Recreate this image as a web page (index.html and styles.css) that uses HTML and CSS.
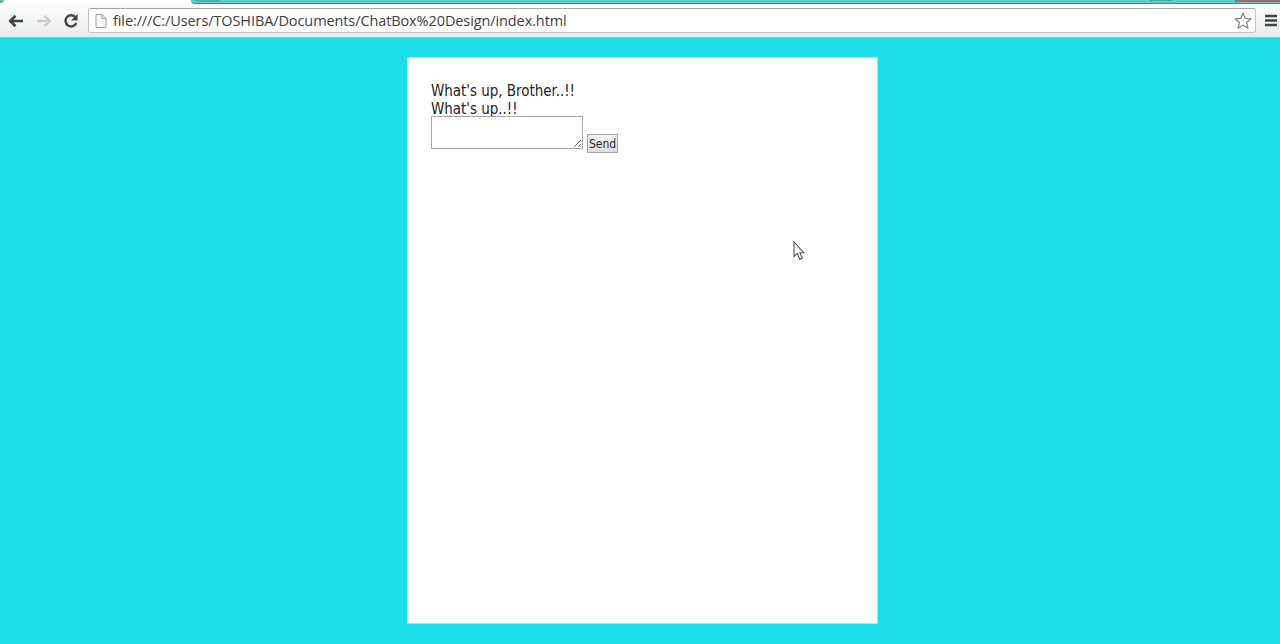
FILE: index.html
```html
<!DOCTYPE html>
<html lang="en">
<head>
<meta charset="utf-8">
<title>ChatBox Design</title>
<link rel="stylesheet" href="styles.css">
</head>
<body>
<header class="browser">
  <div class="tabstrip">
    <span class="tab-left"></span>
    <span class="tab-active"></span>
    <span class="strip"><i class="new-tab"></i><i class="minimize"></i><i class="close"></i></span>
  </div>
  <div class="toolbar">
    <svg class="back" width="16" height="14" viewBox="0 0 16 14"><path d="M15 7H3M7.5 1.8L2.3 7l5.2 5.2" fill="none" stroke="#41433f" stroke-width="2.7"/></svg>
    <svg class="forward" width="16" height="14" viewBox="0 0 16 14"><path d="M1 7h12M8.5 1.8L13.7 7l-5.2 5.2" fill="none" stroke="#cbcccb" stroke-width="2.4"/></svg>
    <svg class="reload" width="16" height="16" viewBox="0 0 16 16"><path d="M12.6 4.4A5.6 5.6 0 1 0 13.3 10" fill="none" stroke="#454745" stroke-width="2.4"/><path d="M14.6 1v6.6H8z" fill="#454745"/></svg>
    <div class="address">
      <svg class="page" width="12" height="16" viewBox="0 0 12 16"><path d="M1 1.5h6l4 4v9H1zM7 1.5v4h4" fill="#fafafa" stroke="#9b9b9b"/></svg>
      <span class="url">file:///C:/Users/TOSHIBA/Documents/ChatBox%20Design/index.html</span>
      <svg class="star" width="18" height="18" viewBox="0 0 18 18"><path d="M9 1.2l2.2 5.1 5.7.5-4.3 3.8 1.3 5.7L9 13.3l-4.9 3 1.3-5.7-4.3-3.8 5.7-.5z" fill="#fff" stroke="#858585" stroke-width="1.3" stroke-linejoin="round"/></svg>
    </div>
    <svg class="menu" width="12" height="13" viewBox="0 0 12 13"><path d="M0 2h12M0 6.5h12M0 11h12" stroke="#424442" stroke-width="2.7"/></svg>
  </div>
</header>
<main class="chatbox">
  <div class="message">What's up, Brother..!!</div>
  <div class="message">What's up..!!</div>
  <form class="composer">
    <textarea class="entry" aria-label="Message"></textarea>
    <button class="send" type="button">Send</button>
  </form>
</main>
<svg class="pointer" width="13" height="20" viewBox="0 0 13 20"><path d="M1 1v14.5l3.3-3 2.5 5.7 2.5-1.1-2.4-5.4h3.9z" fill="#fff" stroke="#555" stroke-width="1.1"/></svg>
</body>
</html>
```
FILE: styles.css
```css
* { box-sizing: border-box; }
body { margin: 0; height: 644px; overflow: hidden; background: #1cdee8; font-family: "DejaVu Sans Condensed", "DejaVu Sans", sans-serif; }
svg { display: block; flex: none; }
.browser { height: 38px; display: flex; flex-direction: column; background: #f8f9f9; }
.tabstrip { height: 4px; display: flex; flex: none; }
.tab-left { width: 4px; height: 3px; background: #5fb5a4; border-bottom-right-radius: 4px; }
.tab-active { width: 187px; background: #fdfdfd; }
.strip { flex: 1; display: flex; background: #5ccfcd; border-bottom: 1px solid #388f8e; border-bottom-left-radius: 5px; }
.new-tab { width: 26px; height: 2px; margin-left: 4px; background: #48b5b2; border-radius: 0 0 4px 4px; }
.minimize { width: 22px; height: 1px; margin-left: auto; background: #43a2a6; }
.close { width: 45px; height: 2px; margin-left: 63px; background: #a96566; }
.toolbar { height: 34px; display: flex; align-items: center; padding: 0 2px 0 8px; background: linear-gradient(#fdfdfd, #e9ebeb); border-bottom: 1px solid #a6bdbb; }
.forward { margin-left: 12px; }
.reload { margin-left: 11px; }
.address { width: 1168px; height: 25px; margin-left: 9px; display: flex; align-items: center; padding: 1px 3px 0 6px; background: #fff; border: 1px solid #c0c3c3; border-top-color: #a3a6a6; border-radius: 3px; }
.url { margin-left: 6px; font: 14.5px/20px "Open Sans", sans-serif; letter-spacing: -0.1px; color: #3e403f; white-space: nowrap; }
.star { margin-left: auto; }
.menu { margin-left: 9px; }
.chatbox { width: 471px; height: 567px; margin: 19px 0 0 407px; padding: 24px 23px; background: #fff; border: 1px solid #a5e6e9; }
.message { height: 18px; font-size: 15px; line-height: 18px; letter-spacing: -0.03px; color: #242424; white-space: nowrap; }
.composer { height: 38px; margin: -2px 0 0; display: flex; align-items: flex-start; }
.entry { width: 152px; height: 33px; margin: 0; background: transparent; border: 1px solid #a7a7a7; resize: both; }
.send { width: 31px; height: 19px; margin: 18px 0 0 4px; padding: 1px 0 0; display: flex; align-items: center; justify-content: center; font: 12px/16px "DejaVu Sans Condensed", sans-serif; color: #292929; background: linear-gradient(#f5f5f5, #dedede); border: 1px solid #a4a4a4; }
.pointer { position: absolute; left: 793px; top: 241px; }
```
